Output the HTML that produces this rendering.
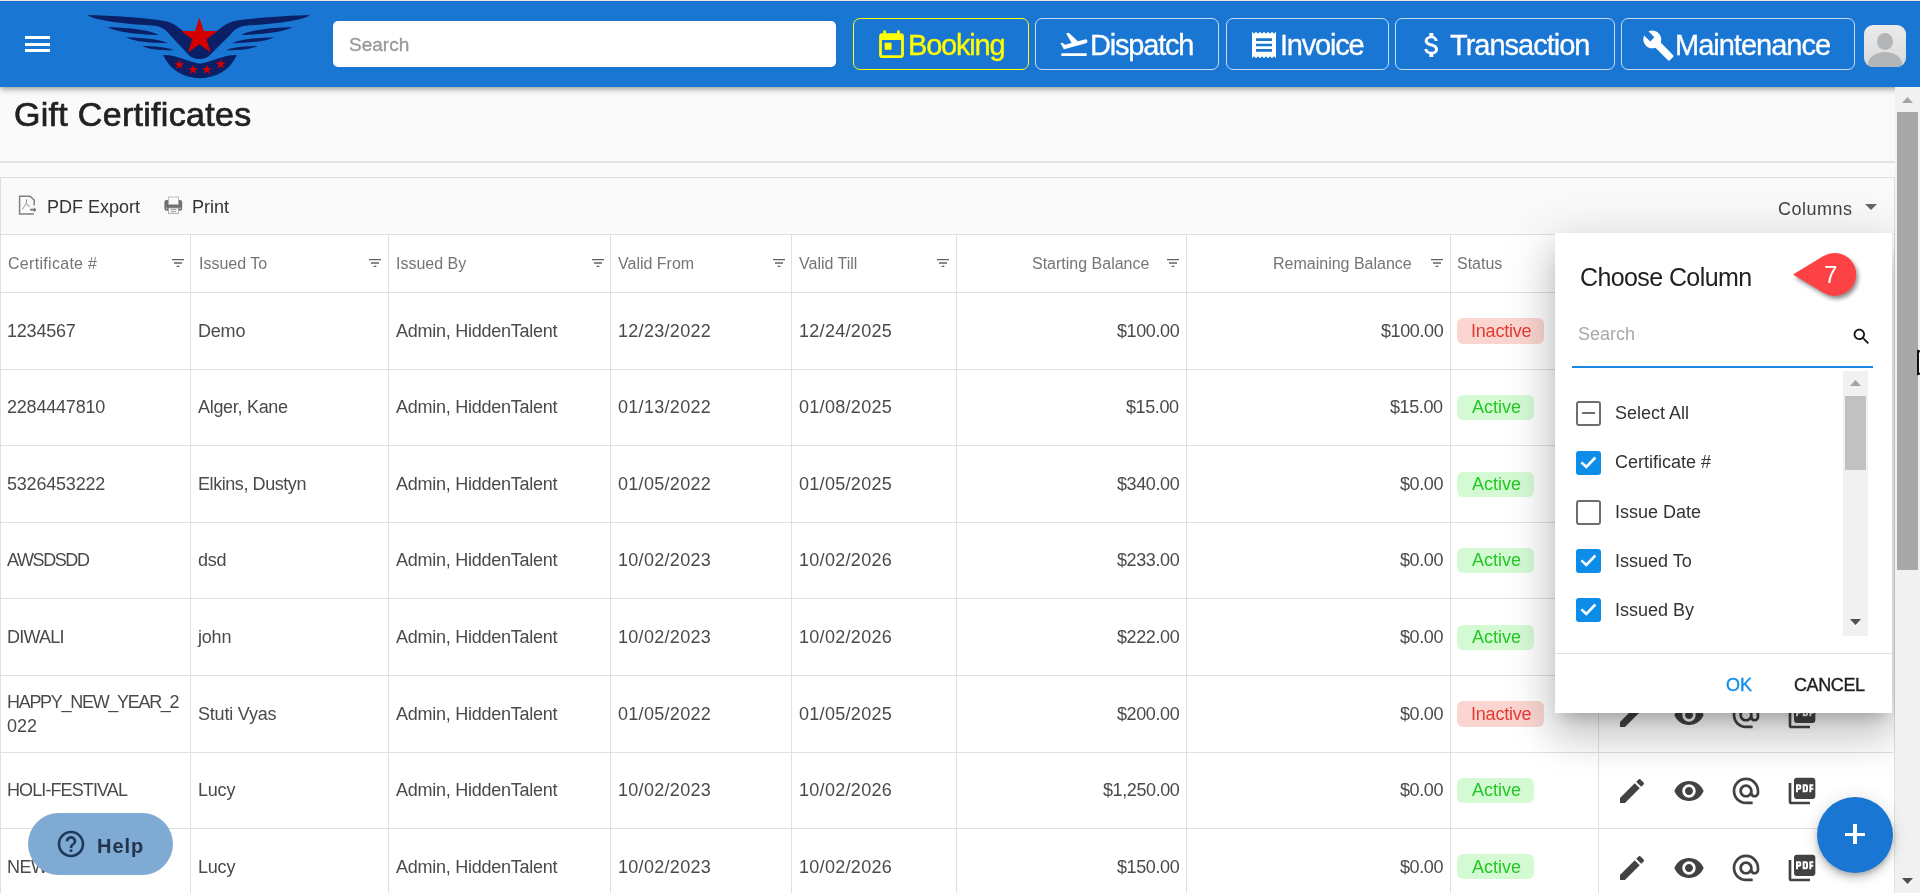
<!DOCTYPE html>
<html><head><meta charset="utf-8">
<style>
*{box-sizing:border-box;margin:0;padding:0}
html,body{width:1920px;height:893px;overflow:hidden;background:#fafafa;font-family:"Liberation Sans",sans-serif;color:#333;position:relative}
.abs{position:absolute}
.t{position:absolute;line-height:1;white-space:nowrap;will-change:transform}
.ic{position:absolute}
#hdr{position:absolute;left:0;top:0;width:1920px;height:87px;background:#1976d2;border-top:1px solid #e9e4dc;box-shadow:0 2px 4px -1px rgba(0,0,0,.2),0 4px 5px 0 rgba(0,0,0,.14),0 1px 10px 0 rgba(0,0,0,.12);z-index:5}
.nb{position:absolute;top:17px;height:52px;border:1px solid rgba(255,255,255,.75);border-radius:7px;color:#fff;font-size:29px;white-space:nowrap}
.nb span{position:absolute;top:9.5px;will-change:transform;-webkit-text-stroke:0.3px currentColor}
.nb svg{position:absolute;fill:currentColor;margin-top:0.8px}
.bx{position:absolute}
</style></head><body>
<div id="hdr">
  <!-- hamburger -->
  <div class="abs" style="left:25px;top:35px;width:25px;height:3px;background:#fff"></div>
  <div class="abs" style="left:25px;top:42px;width:25px;height:3px;background:#fff"></div>
  <div class="abs" style="left:25px;top:48px;width:25px;height:3px;background:#fff"></div>
  <!-- search -->
  <div class="abs" style="left:333px;top:20px;width:503px;height:46px;background:#fff;border-radius:5px"></div>
  <div class="abs" style="left:349px;top:33px;font-size:19px;color:#999;-webkit-text-stroke:0.35px #999;will-change:transform">Search</div>

  <!-- logo -->
  <svg class="abs" style="left:80px;top:4px" width="240" height="80" viewBox="0 0 1920 640">
    <g fill="#0a1f66">
      <path d="M60 80 C 250 85, 520 100, 690 130 C 760 150, 800 190, 830 210 L 1090 210 C 1120 190, 1160 150, 1230 130 C 1400 100, 1670 85, 1840 80 C 1790 120, 1600 150, 1320 165 C 1260 175, 1230 200, 1200 240 L 1030 410 C 990 440, 920 440, 880 410 L 720 240 C 690 200, 660 175, 600 165 C 320 150, 110 120, 60 80 Z"/>
      <path d="M220 175 C 350 180, 540 190, 630 240 C 500 235, 290 220, 220 175 Z"/>
      <path d="M370 258 C 470 262, 640 270, 700 305 C 600 305, 430 295, 370 258 Z"/>
      <path d="M500 328 C 570 330, 700 335, 750 362 C 670 365, 540 355, 500 328 Z"/>
      <path d="M1700 175 C 1570 180, 1380 190, 1290 240 C 1420 235, 1630 220, 1700 175 Z"/>
      <path d="M1550 258 C 1450 262, 1280 270, 1220 305 C 1320 305, 1490 295, 1550 258 Z"/>
      <path d="M1420 328 C 1350 330, 1220 335, 1170 362 C 1250 365, 1380 355, 1420 328 Z"/>
      <path d="M665 400 C 760 395, 860 450, 960 470 C 1060 450, 1160 395, 1255 400 C 1200 520, 1090 585, 960 585 C 830 585, 720 520, 665 400 Z"/>
    </g>
    <g fill="#d40000">
      <path d="M955 100 L 990 207 L 1102 207 L 1012 273 L 1046 380 L 955 314 L 864 380 L 898 273 L 808 207 L 920 207 Z"/>
      <path id="st" d="M0 -42 L 10 -13 L 40 -13 L 16 5 L 25 34 L 0 16 L -25 34 L -16 5 L -40 -13 L -10 -13 Z" transform="translate(795 478)"/>
      <use href="#st" transform="translate(110 40)"/>
      <use href="#st" transform="translate(220 40)"/>
      <use href="#st" transform="translate(330 -5)"/>
    </g>
  </svg>
  <!-- nav buttons -->
  <div class="nb" style="left:853px;width:176px;border-color:#ffff00;color:#ffff00">
    <svg style="left:21px;top:9px" width="33" height="33" viewBox="0 0 24 24"><path d="M19 3h-1V1h-2v2H8V1H6v2H5c-1.11 0-1.99.9-1.99 2L3 19c0 1.1.89 2 2 2h14c1.1 0 2-.9 2-2V5c0-1.1-.9-2-2-2zm0 16H5V8h14v11zM7 10h5v5H7z"/></svg>
    <span style="left:54px;letter-spacing:-1.2px">Booking</span>
  </div>
  <div class="nb" style="left:1035px;width:184px">
    <svg style="left:22px;top:8px" width="32" height="32" viewBox="0 0 24 24"><path d="M2.5 19h19v2h-19zm19.57-9.36c-.21-.8-1.04-1.28-1.84-1.06L14.92 10l-6.9-6.43-1.93.51 4.14 7.17-4.97 1.33-1.97-1.54-1.45.39 1.82 3.16.77 1.33 1.6-.43 5.31-1.42 4.35-1.16L21 11.49c.81-.23 1.28-1.05 1.07-1.85z"/></svg>
    <span style="left:54px;letter-spacing:-1.2px">Dispatch</span>
  </div>
  <div class="nb" style="left:1226px;width:163px">
    <svg style="left:21px;top:9px" width="32" height="32" viewBox="0 0 24 24"><path d="M18 17H6v-2h12v2zm0-4H6v-2h12v2zm0-4H6V7h12v2zM3 22l1.5-1.5L6 22l1.5-1.5L9 22l1.5-1.5L12 22l1.5-1.5L15 22l1.5-1.5L18 22l1.5-1.5L21 22V2l-1.5 1.5L18 2l-1.5 1.5L15 2l-1.5 1.5L12 2l-1.5 1.5L9 2 7.5 3.5 6 2 4.5 3.5 3 2v20z"/></svg>
    <span style="left:53px;letter-spacing:-1.2px">Invoice</span>
  </div>
  <div class="nb" style="left:1395px;width:220px">
    <svg style="left:20px;top:9px" width="32" height="32" viewBox="0 0 24 24"><path d="M11.8 10.9c-2.27-.59-3-1.2-3-2.15 0-1.09 1.01-1.85 2.7-1.850 1.78 0 2.44.85 2.5 2.1h2.21c-.07-1.72-1.12-3.3-3.21-3.81V3h-3v2.16c-1.940.42-3.5 1.68-3.5 3.61 0 2.31 1.91 3.46 4.7 4.13 2.5.6 3 1.48 3 2.41 0 .69-.49 1.79-2.7 1.79-2.06 0-2.87-.92-2.98-2.1h-2.2c.12 2.19 1.76 3.42 3.68 3.83V21h3v-2.15c1.95-.37 3.5-1.5 3.5-3.55 0-2.84-2.43-3.81-4.7-4.4z"/></svg>
    <span style="left:54px;letter-spacing:-1px">Transaction</span>
  </div>
  <div class="nb" style="left:1621px;width:234px">
    <svg style="left:20px;top:9px" width="33" height="33" viewBox="0 0 24 24"><path d="M22.7 19l-9.1-9.1c.9-2.3.4-5-1.5-6.9-2-2-5-2.4-7.4-1.3L9 6 6 9 1.6 4.7C.4 7.1.9 10.1 2.9 12.1c1.9 1.9 4.6 2.4 6.9 1.5l9.1 9.1c.4.4 1 .4 1.4 0l2.3-2.3c.5-.4.5-1.1.1-1.4z"/></svg>
    <span style="left:53px;letter-spacing:-1px">Maintenance</span>
  </div>
  <!-- avatar -->
  <div class="abs" style="left:1864px;top:24px;width:42px;height:42px;border-radius:9px;background:linear-gradient(#ebebeb,#d9d9d9);overflow:hidden">
    <div class="abs" style="left:13px;top:8px;width:16px;height:17px;border-radius:50%;background:#b3b6b8"></div>
    <div class="abs" style="left:4px;top:27px;width:34px;height:24px;border-radius:50%;background:#b3b6b8"></div>
  </div>
</div>

<div class="t" style="left:14px;top:97.22px;font-size:34px;color:#212121;font-weight:400;letter-spacing:0.3px;-webkit-text-stroke:0.7px #212121">Gift Certificates</div>
<div class="bx" style="left:0;top:161px;width:1895px;height:2px;background:#e3e3e3"></div>
<div class="bx" style="left:0;top:177px;width:1895px;height:716px;border:1px solid #e0e0e0;border-bottom:none;background:#fff"></div>
<div class="bx" style="left:1px;top:178px;width:1893px;height:56px;background:#fafafa"></div>
<div class="bx" style="left:0;top:234px;width:1895px;height:1px;background:#e0e0e0"></div>
<svg class="ic" style="left:14px;top:190px" width="30" height="30" viewBox="14 190 30 30"><path d="M34.2 205.6V200L30.1 196.2H19.6V214H33.8" fill="none" stroke="#808080" stroke-width="1.5"/><path d="M22.3 209.5L26.4 203.2V199.3M26.4 203.2L28 205.6 29.9 206.3" fill="none" stroke="#8a8a8a" stroke-width="0.9"/><path d="M30.1 209.7H34.2" stroke="#707070" stroke-width="1.8"/><path d="M33.8 207.2L36.4 209.7 33.8 212.2Z" fill="#707070"/></svg>
<div class="t" style="left:47px;top:197.76px;font-size:18px;color:#333;font-weight:400;">PDF Export</div>
<svg class="ic" style="left:158px;top:190px" width="30" height="30" viewBox="158 190 30 30"><rect x="164.4" y="200" width="17.8" height="10.7" rx="2.2" fill="#707070"/><rect x="168.6" y="197" width="9.8" height="7.6" fill="#fafafa" stroke="#b0b0b0" stroke-width="0.8"/><rect x="168.6" y="208" width="9.8" height="5.6" fill="#fafafa" stroke="#a0a0a0" stroke-width="0.8"/><path d="M170.6 209.6h5.8M170.6 211.7h5.8" stroke="#808080" stroke-width="0.8"/><circle cx="166.5" cy="208.2" r="0.7" fill="#ddd"/><circle cx="180.1" cy="208.2" r="0.7" fill="#ddd"/></svg>
<div class="t" style="left:192px;top:197.76px;font-size:18px;color:#333;font-weight:400;">Print</div>
<div class="t" style="left:1778px;top:199.76px;font-size:18px;color:#424242;font-weight:400;letter-spacing:0.5px">Columns</div>
<svg class="ic" style="left:1864px;top:203px" width="14" height="8" viewBox="0 0 14 8"><path d="M1 1h12L7 7z" fill="#666"/></svg>
<div class="bx" style="left:190px;top:235px;width:1px;height:658px;background:#e0e0e0"></div>
<div class="bx" style="left:388px;top:235px;width:1px;height:658px;background:#e0e0e0"></div>
<div class="bx" style="left:610px;top:235px;width:1px;height:658px;background:#e0e0e0"></div>
<div class="bx" style="left:791px;top:235px;width:1px;height:658px;background:#e0e0e0"></div>
<div class="bx" style="left:956px;top:235px;width:1px;height:658px;background:#e0e0e0"></div>
<div class="bx" style="left:1186px;top:235px;width:1px;height:658px;background:#e0e0e0"></div>
<div class="bx" style="left:1450px;top:235px;width:1px;height:658px;background:#e0e0e0"></div>
<div class="bx" style="left:1598px;top:235px;width:1px;height:658px;background:#e0e0e0"></div>
<div class="bx" style="left:1894px;top:235px;width:1px;height:658px;background:#e0e0e0"></div>
<div class="bx" style="left:1px;top:292px;width:1892px;height:1px;background:#e0e0e0"></div>
<div class="bx" style="left:1px;top:369px;width:1892px;height:1px;background:#e0e0e0"></div>
<div class="bx" style="left:1px;top:445px;width:1892px;height:1px;background:#e0e0e0"></div>
<div class="bx" style="left:1px;top:522px;width:1892px;height:1px;background:#e0e0e0"></div>
<div class="bx" style="left:1px;top:598px;width:1892px;height:1px;background:#e0e0e0"></div>
<div class="bx" style="left:1px;top:675px;width:1892px;height:1px;background:#e0e0e0"></div>
<div class="bx" style="left:1px;top:752px;width:1892px;height:1px;background:#e0e0e0"></div>
<div class="bx" style="left:1px;top:828px;width:1892px;height:1px;background:#e0e0e0"></div>
<div class="t" style="left:8px;top:256.26px;font-size:16px;color:#757575;font-weight:400;letter-spacing:0.3px">Certificate #</div>
<div class="t" style="left:199px;top:256.26px;font-size:16px;color:#757575;font-weight:400;">Issued To</div>
<div class="t" style="left:396px;top:256.26px;font-size:16px;color:#757575;font-weight:400;">Issued By</div>
<div class="t" style="left:618px;top:256.26px;font-size:16px;color:#757575;font-weight:400;">Valid From</div>
<div class="t" style="left:799px;top:256.26px;font-size:16px;color:#757575;font-weight:400;">Valid Till</div>
<div class="t" style="right:771px;top:256.26px;font-size:16px;color:#757575;font-weight:400;">Starting Balance</div>
<div class="t" style="right:508px;top:256.26px;font-size:16px;color:#757575;font-weight:400;">Remaining Balance</div>
<div class="t" style="left:1457px;top:256.26px;font-size:16px;color:#757575;font-weight:400;">Status</div>
<svg class="ic" style="left:170px;top:254.8px" width="16" height="16" viewBox="0 0 24 24"><path fill="#616161" d="M10 18h4v-2h-4v2zM3 6v2h18V6H3zm3 7h12v-2H6v2z"/></svg>
<svg class="ic" style="left:367px;top:254.8px" width="16" height="16" viewBox="0 0 24 24"><path fill="#616161" d="M10 18h4v-2h-4v2zM3 6v2h18V6H3zm3 7h12v-2H6v2z"/></svg>
<svg class="ic" style="left:589.5px;top:254.8px" width="16" height="16" viewBox="0 0 24 24"><path fill="#616161" d="M10 18h4v-2h-4v2zM3 6v2h18V6H3zm3 7h12v-2H6v2z"/></svg>
<svg class="ic" style="left:770.7px;top:254.8px" width="16" height="16" viewBox="0 0 24 24"><path fill="#616161" d="M10 18h4v-2h-4v2zM3 6v2h18V6H3zm3 7h12v-2H6v2z"/></svg>
<svg class="ic" style="left:935px;top:254.8px" width="16" height="16" viewBox="0 0 24 24"><path fill="#616161" d="M10 18h4v-2h-4v2zM3 6v2h18V6H3zm3 7h12v-2H6v2z"/></svg>
<svg class="ic" style="left:1165.3px;top:254.8px" width="16" height="16" viewBox="0 0 24 24"><path fill="#616161" d="M10 18h4v-2h-4v2zM3 6v2h18V6H3zm3 7h12v-2H6v2z"/></svg>
<svg class="ic" style="left:1429px;top:254.8px" width="16" height="16" viewBox="0 0 24 24"><path fill="#616161" d="M10 18h4v-2h-4v2zM3 6v2h18V6H3zm3 7h12v-2H6v2z"/></svg>
<div class="t" style="left:7px;top:321.65px;font-size:18px;color:#4a4a4a;font-weight:400;letter-spacing:-0.2px">1234567</div>
<div class="t" style="left:198px;top:321.65px;font-size:18px;color:#4a4a4a;font-weight:400;letter-spacing:-0.2px">Demo</div>
<div class="t" style="left:396px;top:321.65px;font-size:18px;color:#4a4a4a;font-weight:400;letter-spacing:-0.26px">Admin, HiddenTalent</div>
<div class="t" style="left:618px;top:321.65px;font-size:18px;color:#4a4a4a;font-weight:400;letter-spacing:0.3px">12/23/2022</div>
<div class="t" style="left:799px;top:321.65px;font-size:18px;color:#4a4a4a;font-weight:400;letter-spacing:0.3px">12/24/2025</div>
<div class="t" style="right:741px;top:321.65px;font-size:18px;color:#4a4a4a;font-weight:400;letter-spacing:-0.4px">$100.00</div>
<div class="t" style="right:477px;top:321.65px;font-size:18px;color:#4a4a4a;font-weight:400;letter-spacing:-0.4px">$100.00</div>
<div class="bx" style="left:1457px;top:318.0px;width:87px;height:26px;border-radius:6px;background:#fbd6d1"></div>
<div class="t" style="left:1470.5px;top:321.65px;font-size:18px;color:#e53935;font-weight:400;letter-spacing:-0.2px">Inactive</div>
<svg class="ic" style="left:1616.4px;top:315.78499999999997px" width="32" height="32" viewBox="0 0 24 24"><path fill="#424242" d="M3 17.25V21h3.75L17.81 9.94l-3.75-3.75L3 17.25zM20.71 7.04c.39-.39.39-1.02 0-1.41l-2.34-2.34c-.39-.39-1.02-.39-1.41 0l-1.83 1.83 3.75 3.75 1.83-1.83z"/></svg>
<svg class="ic" style="left:1673px;top:315.78499999999997px" width="32" height="32" viewBox="0 0 24 24"><path fill="#424242" d="M12 4.5C7 4.5 2.73 7.61 1 12c1.73 4.39 6 7.5 11 7.5s9.27-3.11 11-7.5c-1.73-4.39-6-7.5-11-7.5zM12 17c-2.760 0-5-2.24-5-5s2.24-5 5-5 5 2.24 5 5-2.24 5-5 5zm0-8c-1.66 0-3 1.34-3 3s1.34 3 3 3 3-1.34 3-3-1.34-3-3-3z"/></svg>
<svg class="ic" style="left:1729.6px;top:315.78499999999997px" width="32" height="32" viewBox="0 0 24 24"><path fill="#424242" d="M12 1.95c-5.52 0-10 4.48-10 10s4.48 10 10 10h5v-2h-5c-4.34 0-8-3.66-8-8s3.66-8 8-8 8 3.66 8 8v1.43c0 .79-.71 1.57-1.5 1.57s-1.5-.78-1.5-1.57v-1.43c0-2.76-2.24-5-5-5s-5 2.24-5 5 2.24 5 5 5c1.38 0 2.64-.56 3.54-1.47.65.89 1.77 1.47 2.96 1.470 1.97 0 3.5-1.6 3.5-3.57v-1.43c0-5.52-4.48-10-10-10zm0 13c-1.66 0-3-1.34-3-3s1.34-3 3-3 3 1.34 3 3-1.34 3-3 3z"/></svg>
<svg class="ic" style="left:1786.4px;top:315.78499999999997px" width="32" height="32" viewBox="0 0 24 24"><path fill="#424242" d="M20 2H8c-1.1 0-2 .9-2 2v12c0 1.1.9 2 2 2h12c1.1 0 2-.9 2-2V4c0-1.1-.9-2-2-2zm-8.5 7.5c0 .83-.67 1.5-1.5 1.5H9v2H7.5V7H10c.83 0 1.5.67 1.5 1.5v1zm5 2c0 .83-.67 1.5-1.5 1.5h-2.5V7H15c.83 0 1.5.67 1.5 1.5v3zm4-3H19v1h1.5V11H19v2h-1.5V7h3v1.5zM9 9.5h1v-1H9v1zM4 6H2v14c0 1.1.9 2 2 2h14v-2H4V6zm10 5.5h1v-3h-1v3z"/></svg>
<div class="t" style="left:7px;top:398.22px;font-size:18px;color:#4a4a4a;font-weight:400;letter-spacing:-0.2px">2284447810</div>
<div class="t" style="left:198px;top:398.22px;font-size:18px;color:#4a4a4a;font-weight:400;letter-spacing:-0.3px">Alger, Kane</div>
<div class="t" style="left:396px;top:398.22px;font-size:18px;color:#4a4a4a;font-weight:400;letter-spacing:-0.26px">Admin, HiddenTalent</div>
<div class="t" style="left:618px;top:398.22px;font-size:18px;color:#4a4a4a;font-weight:400;letter-spacing:0.3px">01/13/2022</div>
<div class="t" style="left:799px;top:398.22px;font-size:18px;color:#4a4a4a;font-weight:400;letter-spacing:0.3px">01/08/2025</div>
<div class="t" style="right:741px;top:398.22px;font-size:18px;color:#4a4a4a;font-weight:400;letter-spacing:-0.4px">$15.00</div>
<div class="t" style="right:477px;top:398.22px;font-size:18px;color:#4a4a4a;font-weight:400;letter-spacing:-0.4px">$15.00</div>
<div class="bx" style="left:1457px;top:395.0px;width:77px;height:25px;border-radius:6px;background:#d4fad4"></div>
<div class="t" style="left:1471.5px;top:398.22px;font-size:18px;color:#22c922;font-weight:400;">Active</div>
<svg class="ic" style="left:1616.4px;top:392.355px" width="32" height="32" viewBox="0 0 24 24"><path fill="#424242" d="M3 17.25V21h3.75L17.81 9.94l-3.75-3.75L3 17.25zM20.71 7.04c.39-.39.39-1.02 0-1.41l-2.34-2.34c-.39-.39-1.02-.39-1.41 0l-1.83 1.83 3.75 3.75 1.83-1.83z"/></svg>
<svg class="ic" style="left:1673px;top:392.355px" width="32" height="32" viewBox="0 0 24 24"><path fill="#424242" d="M12 4.5C7 4.5 2.73 7.61 1 12c1.73 4.39 6 7.5 11 7.5s9.27-3.11 11-7.5c-1.73-4.39-6-7.5-11-7.5zM12 17c-2.760 0-5-2.24-5-5s2.24-5 5-5 5 2.24 5 5-2.24 5-5 5zm0-8c-1.66 0-3 1.34-3 3s1.34 3 3 3 3-1.34 3-3-1.34-3-3-3z"/></svg>
<svg class="ic" style="left:1729.6px;top:392.355px" width="32" height="32" viewBox="0 0 24 24"><path fill="#424242" d="M12 1.95c-5.52 0-10 4.48-10 10s4.48 10 10 10h5v-2h-5c-4.34 0-8-3.66-8-8s3.66-8 8-8 8 3.66 8 8v1.43c0 .79-.71 1.57-1.5 1.57s-1.5-.78-1.5-1.57v-1.43c0-2.76-2.24-5-5-5s-5 2.24-5 5 2.24 5 5 5c1.38 0 2.64-.56 3.54-1.47.65.89 1.77 1.47 2.96 1.470 1.97 0 3.5-1.6 3.5-3.57v-1.43c0-5.52-4.48-10-10-10zm0 13c-1.66 0-3-1.34-3-3s1.34-3 3-3 3 1.34 3 3-1.34 3-3 3z"/></svg>
<svg class="ic" style="left:1786.4px;top:392.355px" width="32" height="32" viewBox="0 0 24 24"><path fill="#424242" d="M20 2H8c-1.1 0-2 .9-2 2v12c0 1.1.9 2 2 2h12c1.1 0 2-.9 2-2V4c0-1.1-.9-2-2-2zm-8.5 7.5c0 .83-.67 1.5-1.5 1.5H9v2H7.5V7H10c.83 0 1.5.67 1.5 1.5v1zm5 2c0 .83-.67 1.5-1.5 1.5h-2.5V7H15c.83 0 1.5.67 1.5 1.5v3zm4-3H19v1h1.5V11H19v2h-1.5V7h3v1.5zM9 9.5h1v-1H9v1zM4 6H2v14c0 1.1.9 2 2 2h14v-2H4V6zm10 5.5h1v-3h-1v3z"/></svg>
<div class="t" style="left:7px;top:474.79px;font-size:18px;color:#4a4a4a;font-weight:400;letter-spacing:-0.2px">5326453222</div>
<div class="t" style="left:198px;top:474.79px;font-size:18px;color:#4a4a4a;font-weight:400;letter-spacing:-0.43px">Elkins, Dustyn</div>
<div class="t" style="left:396px;top:474.79px;font-size:18px;color:#4a4a4a;font-weight:400;letter-spacing:-0.26px">Admin, HiddenTalent</div>
<div class="t" style="left:618px;top:474.79px;font-size:18px;color:#4a4a4a;font-weight:400;letter-spacing:0.3px">01/05/2022</div>
<div class="t" style="left:799px;top:474.79px;font-size:18px;color:#4a4a4a;font-weight:400;letter-spacing:0.3px">01/05/2025</div>
<div class="t" style="right:741px;top:474.79px;font-size:18px;color:#4a4a4a;font-weight:400;letter-spacing:-0.4px">$340.00</div>
<div class="t" style="right:477px;top:474.79px;font-size:18px;color:#4a4a4a;font-weight:400;letter-spacing:-0.4px">$0.00</div>
<div class="bx" style="left:1457px;top:471.5px;width:77px;height:25px;border-radius:6px;background:#d4fad4"></div>
<div class="t" style="left:1471.5px;top:474.79px;font-size:18px;color:#22c922;font-weight:400;">Active</div>
<svg class="ic" style="left:1616.4px;top:468.92499999999995px" width="32" height="32" viewBox="0 0 24 24"><path fill="#424242" d="M3 17.25V21h3.75L17.81 9.94l-3.75-3.75L3 17.25zM20.71 7.04c.39-.39.39-1.02 0-1.41l-2.34-2.34c-.39-.39-1.02-.39-1.41 0l-1.83 1.83 3.75 3.75 1.83-1.83z"/></svg>
<svg class="ic" style="left:1673px;top:468.92499999999995px" width="32" height="32" viewBox="0 0 24 24"><path fill="#424242" d="M12 4.5C7 4.5 2.73 7.61 1 12c1.73 4.39 6 7.5 11 7.5s9.27-3.11 11-7.5c-1.73-4.39-6-7.5-11-7.5zM12 17c-2.760 0-5-2.24-5-5s2.24-5 5-5 5 2.24 5 5-2.24 5-5 5zm0-8c-1.66 0-3 1.34-3 3s1.34 3 3 3 3-1.34 3-3-1.34-3-3-3z"/></svg>
<svg class="ic" style="left:1729.6px;top:468.92499999999995px" width="32" height="32" viewBox="0 0 24 24"><path fill="#424242" d="M12 1.95c-5.52 0-10 4.48-10 10s4.48 10 10 10h5v-2h-5c-4.34 0-8-3.66-8-8s3.66-8 8-8 8 3.66 8 8v1.43c0 .79-.71 1.57-1.5 1.57s-1.5-.78-1.5-1.57v-1.43c0-2.76-2.24-5-5-5s-5 2.24-5 5 2.24 5 5 5c1.38 0 2.64-.56 3.54-1.47.65.89 1.77 1.47 2.96 1.470 1.97 0 3.5-1.6 3.5-3.57v-1.43c0-5.52-4.48-10-10-10zm0 13c-1.66 0-3-1.34-3-3s1.34-3 3-3 3 1.34 3 3-1.34 3-3 3z"/></svg>
<svg class="ic" style="left:1786.4px;top:468.92499999999995px" width="32" height="32" viewBox="0 0 24 24"><path fill="#424242" d="M20 2H8c-1.1 0-2 .9-2 2v12c0 1.1.9 2 2 2h12c1.1 0 2-.9 2-2V4c0-1.1-.9-2-2-2zm-8.5 7.5c0 .83-.67 1.5-1.5 1.5H9v2H7.5V7H10c.83 0 1.5.67 1.5 1.5v1zm5 2c0 .83-.67 1.5-1.5 1.5h-2.5V7H15c.83 0 1.5.67 1.5 1.5v3zm4-3H19v1h1.5V11H19v2h-1.5V7h3v1.5zM9 9.5h1v-1H9v1zM4 6H2v14c0 1.1.9 2 2 2h14v-2H4V6zm10 5.5h1v-3h-1v3z"/></svg>
<div class="t" style="left:7px;top:551.36px;font-size:18px;color:#4a4a4a;font-weight:400;letter-spacing:-1.4px">AWSDSDD</div>
<div class="t" style="left:198px;top:551.36px;font-size:18px;color:#4a4a4a;font-weight:400;letter-spacing:-0.2px">dsd</div>
<div class="t" style="left:396px;top:551.36px;font-size:18px;color:#4a4a4a;font-weight:400;letter-spacing:-0.26px">Admin, HiddenTalent</div>
<div class="t" style="left:618px;top:551.36px;font-size:18px;color:#4a4a4a;font-weight:400;letter-spacing:0.3px">10/02/2023</div>
<div class="t" style="left:799px;top:551.36px;font-size:18px;color:#4a4a4a;font-weight:400;letter-spacing:0.3px">10/02/2026</div>
<div class="t" style="right:741px;top:551.36px;font-size:18px;color:#4a4a4a;font-weight:400;letter-spacing:-0.4px">$233.00</div>
<div class="t" style="right:477px;top:551.36px;font-size:18px;color:#4a4a4a;font-weight:400;letter-spacing:-0.4px">$0.00</div>
<div class="bx" style="left:1457px;top:548.1px;width:77px;height:25px;border-radius:6px;background:#d4fad4"></div>
<div class="t" style="left:1471.5px;top:551.36px;font-size:18px;color:#22c922;font-weight:400;">Active</div>
<svg class="ic" style="left:1616.4px;top:545.495px" width="32" height="32" viewBox="0 0 24 24"><path fill="#424242" d="M3 17.25V21h3.75L17.81 9.94l-3.75-3.75L3 17.25zM20.71 7.04c.39-.39.39-1.02 0-1.41l-2.34-2.34c-.39-.39-1.02-.39-1.41 0l-1.83 1.83 3.75 3.75 1.83-1.83z"/></svg>
<svg class="ic" style="left:1673px;top:545.495px" width="32" height="32" viewBox="0 0 24 24"><path fill="#424242" d="M12 4.5C7 4.5 2.73 7.61 1 12c1.73 4.39 6 7.5 11 7.5s9.27-3.11 11-7.5c-1.73-4.39-6-7.5-11-7.5zM12 17c-2.760 0-5-2.24-5-5s2.24-5 5-5 5 2.24 5 5-2.24 5-5 5zm0-8c-1.66 0-3 1.34-3 3s1.34 3 3 3 3-1.34 3-3-1.34-3-3-3z"/></svg>
<svg class="ic" style="left:1729.6px;top:545.495px" width="32" height="32" viewBox="0 0 24 24"><path fill="#424242" d="M12 1.95c-5.52 0-10 4.48-10 10s4.48 10 10 10h5v-2h-5c-4.34 0-8-3.66-8-8s3.66-8 8-8 8 3.66 8 8v1.43c0 .79-.71 1.57-1.5 1.57s-1.5-.78-1.5-1.57v-1.43c0-2.76-2.24-5-5-5s-5 2.24-5 5 2.24 5 5 5c1.38 0 2.64-.56 3.54-1.47.65.89 1.77 1.47 2.96 1.470 1.97 0 3.5-1.6 3.5-3.57v-1.43c0-5.52-4.48-10-10-10zm0 13c-1.66 0-3-1.34-3-3s1.34-3 3-3 3 1.34 3 3-1.34 3-3 3z"/></svg>
<svg class="ic" style="left:1786.4px;top:545.495px" width="32" height="32" viewBox="0 0 24 24"><path fill="#424242" d="M20 2H8c-1.1 0-2 .9-2 2v12c0 1.1.9 2 2 2h12c1.1 0 2-.9 2-2V4c0-1.1-.9-2-2-2zm-8.5 7.5c0 .83-.67 1.5-1.5 1.5H9v2H7.5V7H10c.83 0 1.5.67 1.5 1.5v1zm5 2c0 .83-.67 1.5-1.5 1.5h-2.5V7H15c.83 0 1.5.67 1.5 1.5v3zm4-3H19v1h1.5V11H19v2h-1.5V7h3v1.5zM9 9.5h1v-1H9v1zM4 6H2v14c0 1.1.9 2 2 2h14v-2H4V6zm10 5.5h1v-3h-1v3z"/></svg>
<div class="t" style="left:7px;top:627.93px;font-size:18px;color:#4a4a4a;font-weight:400;letter-spacing:-0.75px">DIWALI</div>
<div class="t" style="left:198px;top:627.93px;font-size:18px;color:#4a4a4a;font-weight:400;letter-spacing:-0.2px">john</div>
<div class="t" style="left:396px;top:627.93px;font-size:18px;color:#4a4a4a;font-weight:400;letter-spacing:-0.26px">Admin, HiddenTalent</div>
<div class="t" style="left:618px;top:627.93px;font-size:18px;color:#4a4a4a;font-weight:400;letter-spacing:0.3px">10/02/2023</div>
<div class="t" style="left:799px;top:627.93px;font-size:18px;color:#4a4a4a;font-weight:400;letter-spacing:0.3px">10/02/2026</div>
<div class="t" style="right:741px;top:627.93px;font-size:18px;color:#4a4a4a;font-weight:400;letter-spacing:-0.4px">$222.00</div>
<div class="t" style="right:477px;top:627.93px;font-size:18px;color:#4a4a4a;font-weight:400;letter-spacing:-0.4px">$0.00</div>
<div class="bx" style="left:1457px;top:624.7px;width:77px;height:25px;border-radius:6px;background:#d4fad4"></div>
<div class="t" style="left:1471.5px;top:627.93px;font-size:18px;color:#22c922;font-weight:400;">Active</div>
<svg class="ic" style="left:1616.4px;top:622.0649999999999px" width="32" height="32" viewBox="0 0 24 24"><path fill="#424242" d="M3 17.25V21h3.75L17.81 9.94l-3.75-3.75L3 17.25zM20.71 7.04c.39-.39.39-1.02 0-1.41l-2.34-2.34c-.39-.39-1.02-.39-1.41 0l-1.83 1.83 3.75 3.75 1.83-1.83z"/></svg>
<svg class="ic" style="left:1673px;top:622.0649999999999px" width="32" height="32" viewBox="0 0 24 24"><path fill="#424242" d="M12 4.5C7 4.5 2.73 7.61 1 12c1.73 4.39 6 7.5 11 7.5s9.27-3.11 11-7.5c-1.73-4.39-6-7.5-11-7.5zM12 17c-2.760 0-5-2.24-5-5s2.24-5 5-5 5 2.24 5 5-2.24 5-5 5zm0-8c-1.66 0-3 1.34-3 3s1.34 3 3 3 3-1.34 3-3-1.34-3-3-3z"/></svg>
<svg class="ic" style="left:1729.6px;top:622.0649999999999px" width="32" height="32" viewBox="0 0 24 24"><path fill="#424242" d="M12 1.95c-5.52 0-10 4.48-10 10s4.48 10 10 10h5v-2h-5c-4.34 0-8-3.66-8-8s3.66-8 8-8 8 3.66 8 8v1.43c0 .79-.71 1.57-1.5 1.57s-1.5-.78-1.5-1.57v-1.43c0-2.76-2.24-5-5-5s-5 2.24-5 5 2.24 5 5 5c1.38 0 2.64-.56 3.54-1.47.65.89 1.77 1.47 2.96 1.470 1.97 0 3.5-1.6 3.5-3.57v-1.43c0-5.52-4.48-10-10-10zm0 13c-1.66 0-3-1.34-3-3s1.34-3 3-3 3 1.34 3 3-1.34 3-3 3z"/></svg>
<svg class="ic" style="left:1786.4px;top:622.0649999999999px" width="32" height="32" viewBox="0 0 24 24"><path fill="#424242" d="M20 2H8c-1.1 0-2 .9-2 2v12c0 1.1.9 2 2 2h12c1.1 0 2-.9 2-2V4c0-1.1-.9-2-2-2zm-8.5 7.5c0 .83-.67 1.5-1.5 1.5H9v2H7.5V7H10c.83 0 1.5.67 1.5 1.5v1zm5 2c0 .83-.67 1.5-1.5 1.5h-2.5V7H15c.83 0 1.5.67 1.5 1.5v3zm4-3H19v1h1.5V11H19v2h-1.5V7h3v1.5zM9 9.5h1v-1H9v1zM4 6H2v14c0 1.1.9 2 2 2h14v-2H4V6zm10 5.5h1v-3h-1v3z"/></svg>
<div class="t" style="left:7px;top:692.96px;font-size:18px;color:#4a4a4a;font-weight:400;letter-spacing:-1.3px">HAPPY_NEW_YEAR_2</div>
<div class="t" style="left:7px;top:716.76px;font-size:18px;color:#4a4a4a;font-weight:400;">022</div>
<div class="t" style="left:198px;top:704.50px;font-size:18px;color:#4a4a4a;font-weight:400;letter-spacing:-0.2px">Stuti Vyas</div>
<div class="t" style="left:396px;top:704.50px;font-size:18px;color:#4a4a4a;font-weight:400;letter-spacing:-0.26px">Admin, HiddenTalent</div>
<div class="t" style="left:618px;top:704.50px;font-size:18px;color:#4a4a4a;font-weight:400;letter-spacing:0.3px">01/05/2022</div>
<div class="t" style="left:799px;top:704.50px;font-size:18px;color:#4a4a4a;font-weight:400;letter-spacing:0.3px">01/05/2025</div>
<div class="t" style="right:741px;top:704.50px;font-size:18px;color:#4a4a4a;font-weight:400;letter-spacing:-0.4px">$200.00</div>
<div class="t" style="right:477px;top:704.50px;font-size:18px;color:#4a4a4a;font-weight:400;letter-spacing:-0.4px">$0.00</div>
<div class="bx" style="left:1457px;top:700.8px;width:87px;height:26px;border-radius:6px;background:#fbd6d1"></div>
<div class="t" style="left:1470.5px;top:704.50px;font-size:18px;color:#e53935;font-weight:400;letter-spacing:-0.2px">Inactive</div>
<svg class="ic" style="left:1616.4px;top:698.635px" width="32" height="32" viewBox="0 0 24 24"><path fill="#424242" d="M3 17.25V21h3.75L17.81 9.94l-3.75-3.75L3 17.25zM20.71 7.04c.39-.39.39-1.02 0-1.41l-2.34-2.34c-.39-.39-1.02-.39-1.41 0l-1.83 1.83 3.75 3.75 1.83-1.83z"/></svg>
<svg class="ic" style="left:1673px;top:698.635px" width="32" height="32" viewBox="0 0 24 24"><path fill="#424242" d="M12 4.5C7 4.5 2.73 7.61 1 12c1.73 4.39 6 7.5 11 7.5s9.27-3.11 11-7.5c-1.73-4.39-6-7.5-11-7.5zM12 17c-2.760 0-5-2.24-5-5s2.24-5 5-5 5 2.24 5 5-2.24 5-5 5zm0-8c-1.66 0-3 1.34-3 3s1.34 3 3 3 3-1.34 3-3-1.34-3-3-3z"/></svg>
<svg class="ic" style="left:1729.6px;top:698.635px" width="32" height="32" viewBox="0 0 24 24"><path fill="#424242" d="M12 1.95c-5.52 0-10 4.48-10 10s4.48 10 10 10h5v-2h-5c-4.34 0-8-3.66-8-8s3.66-8 8-8 8 3.66 8 8v1.43c0 .79-.71 1.57-1.5 1.57s-1.5-.78-1.5-1.57v-1.43c0-2.76-2.24-5-5-5s-5 2.24-5 5 2.24 5 5 5c1.38 0 2.64-.56 3.54-1.47.65.89 1.77 1.47 2.96 1.470 1.97 0 3.5-1.6 3.5-3.57v-1.43c0-5.52-4.48-10-10-10zm0 13c-1.66 0-3-1.34-3-3s1.34-3 3-3 3 1.34 3 3-1.34 3-3 3z"/></svg>
<svg class="ic" style="left:1786.4px;top:698.635px" width="32" height="32" viewBox="0 0 24 24"><path fill="#424242" d="M20 2H8c-1.1 0-2 .9-2 2v12c0 1.1.9 2 2 2h12c1.1 0 2-.9 2-2V4c0-1.1-.9-2-2-2zm-8.5 7.5c0 .83-.67 1.5-1.5 1.5H9v2H7.5V7H10c.83 0 1.5.67 1.5 1.5v1zm5 2c0 .83-.67 1.5-1.5 1.5h-2.5V7H15c.83 0 1.5.67 1.5 1.5v3zm4-3H19v1h1.5V11H19v2h-1.5V7h3v1.5zM9 9.5h1v-1H9v1zM4 6H2v14c0 1.1.9 2 2 2h14v-2H4V6zm10 5.5h1v-3h-1v3z"/></svg>
<div class="t" style="left:7px;top:781.07px;font-size:18px;color:#4a4a4a;font-weight:400;letter-spacing:-0.9px">HOLI-FESTIVAL</div>
<div class="t" style="left:198px;top:781.07px;font-size:18px;color:#4a4a4a;font-weight:400;letter-spacing:-0.2px">Lucy</div>
<div class="t" style="left:396px;top:781.07px;font-size:18px;color:#4a4a4a;font-weight:400;letter-spacing:-0.26px">Admin, HiddenTalent</div>
<div class="t" style="left:618px;top:781.07px;font-size:18px;color:#4a4a4a;font-weight:400;letter-spacing:0.3px">10/02/2023</div>
<div class="t" style="left:799px;top:781.07px;font-size:18px;color:#4a4a4a;font-weight:400;letter-spacing:0.3px">10/02/2026</div>
<div class="t" style="right:741px;top:781.07px;font-size:18px;color:#4a4a4a;font-weight:400;letter-spacing:-0.4px">$1,250.00</div>
<div class="t" style="right:477px;top:781.07px;font-size:18px;color:#4a4a4a;font-weight:400;letter-spacing:-0.4px">$0.00</div>
<div class="bx" style="left:1457px;top:777.8px;width:77px;height:25px;border-radius:6px;background:#d4fad4"></div>
<div class="t" style="left:1471.5px;top:781.07px;font-size:18px;color:#22c922;font-weight:400;">Active</div>
<svg class="ic" style="left:1616.4px;top:775.2049999999999px" width="32" height="32" viewBox="0 0 24 24"><path fill="#424242" d="M3 17.25V21h3.75L17.81 9.94l-3.75-3.75L3 17.25zM20.71 7.04c.39-.39.39-1.02 0-1.41l-2.34-2.34c-.39-.39-1.02-.39-1.41 0l-1.83 1.83 3.75 3.75 1.83-1.83z"/></svg>
<svg class="ic" style="left:1673px;top:775.2049999999999px" width="32" height="32" viewBox="0 0 24 24"><path fill="#424242" d="M12 4.5C7 4.5 2.73 7.61 1 12c1.73 4.39 6 7.5 11 7.5s9.27-3.11 11-7.5c-1.73-4.39-6-7.5-11-7.5zM12 17c-2.760 0-5-2.24-5-5s2.24-5 5-5 5 2.24 5 5-2.24 5-5 5zm0-8c-1.66 0-3 1.34-3 3s1.34 3 3 3 3-1.34 3-3-1.34-3-3-3z"/></svg>
<svg class="ic" style="left:1729.6px;top:775.2049999999999px" width="32" height="32" viewBox="0 0 24 24"><path fill="#424242" d="M12 1.95c-5.52 0-10 4.48-10 10s4.48 10 10 10h5v-2h-5c-4.34 0-8-3.66-8-8s3.66-8 8-8 8 3.66 8 8v1.43c0 .79-.71 1.57-1.5 1.57s-1.5-.78-1.5-1.57v-1.43c0-2.76-2.24-5-5-5s-5 2.24-5 5 2.24 5 5 5c1.38 0 2.64-.56 3.54-1.47.65.89 1.77 1.47 2.96 1.470 1.97 0 3.5-1.6 3.5-3.57v-1.43c0-5.52-4.48-10-10-10zm0 13c-1.66 0-3-1.34-3-3s1.34-3 3-3 3 1.34 3 3-1.34 3-3 3z"/></svg>
<svg class="ic" style="left:1786.4px;top:775.2049999999999px" width="32" height="32" viewBox="0 0 24 24"><path fill="#424242" d="M20 2H8c-1.1 0-2 .9-2 2v12c0 1.1.9 2 2 2h12c1.1 0 2-.9 2-2V4c0-1.1-.9-2-2-2zm-8.5 7.5c0 .83-.67 1.5-1.5 1.5H9v2H7.5V7H10c.83 0 1.5.67 1.5 1.5v1zm5 2c0 .83-.67 1.5-1.5 1.5h-2.5V7H15c.83 0 1.5.67 1.5 1.5v3zm4-3H19v1h1.5V11H19v2h-1.5V7h3v1.5zM9 9.5h1v-1H9v1zM4 6H2v14c0 1.1.9 2 2 2h14v-2H4V6zm10 5.5h1v-3h-1v3z"/></svg>
<div class="t" style="left:7px;top:857.64px;font-size:18px;color:#4a4a4a;font-weight:400;letter-spacing:-0.5px">NEW</div>
<div class="t" style="left:198px;top:857.64px;font-size:18px;color:#4a4a4a;font-weight:400;letter-spacing:-0.2px">Lucy</div>
<div class="t" style="left:396px;top:857.64px;font-size:18px;color:#4a4a4a;font-weight:400;letter-spacing:-0.26px">Admin, HiddenTalent</div>
<div class="t" style="left:618px;top:857.64px;font-size:18px;color:#4a4a4a;font-weight:400;letter-spacing:0.3px">10/02/2023</div>
<div class="t" style="left:799px;top:857.64px;font-size:18px;color:#4a4a4a;font-weight:400;letter-spacing:0.3px">10/02/2026</div>
<div class="t" style="right:741px;top:857.64px;font-size:18px;color:#4a4a4a;font-weight:400;letter-spacing:-0.4px">$150.00</div>
<div class="t" style="right:477px;top:857.64px;font-size:18px;color:#4a4a4a;font-weight:400;letter-spacing:-0.4px">$0.00</div>
<div class="bx" style="left:1457px;top:854.4px;width:77px;height:25px;border-radius:6px;background:#d4fad4"></div>
<div class="t" style="left:1471.5px;top:857.64px;font-size:18px;color:#22c922;font-weight:400;">Active</div>
<svg class="ic" style="left:1616.4px;top:851.775px" width="32" height="32" viewBox="0 0 24 24"><path fill="#424242" d="M3 17.25V21h3.75L17.81 9.94l-3.75-3.75L3 17.25zM20.71 7.04c.39-.39.39-1.02 0-1.41l-2.34-2.34c-.39-.39-1.02-.39-1.41 0l-1.83 1.83 3.75 3.75 1.83-1.83z"/></svg>
<svg class="ic" style="left:1673px;top:851.775px" width="32" height="32" viewBox="0 0 24 24"><path fill="#424242" d="M12 4.5C7 4.5 2.73 7.61 1 12c1.73 4.39 6 7.5 11 7.5s9.27-3.11 11-7.5c-1.73-4.39-6-7.5-11-7.5zM12 17c-2.760 0-5-2.24-5-5s2.24-5 5-5 5 2.24 5 5-2.24 5-5 5zm0-8c-1.66 0-3 1.34-3 3s1.34 3 3 3 3-1.34 3-3-1.34-3-3-3z"/></svg>
<svg class="ic" style="left:1729.6px;top:851.775px" width="32" height="32" viewBox="0 0 24 24"><path fill="#424242" d="M12 1.95c-5.52 0-10 4.48-10 10s4.48 10 10 10h5v-2h-5c-4.34 0-8-3.66-8-8s3.66-8 8-8 8 3.66 8 8v1.43c0 .79-.71 1.57-1.5 1.57s-1.5-.78-1.5-1.57v-1.43c0-2.76-2.24-5-5-5s-5 2.24-5 5 2.24 5 5 5c1.38 0 2.64-.56 3.54-1.47.65.89 1.77 1.47 2.96 1.470 1.97 0 3.5-1.6 3.5-3.57v-1.43c0-5.52-4.48-10-10-10zm0 13c-1.66 0-3-1.34-3-3s1.34-3 3-3 3 1.34 3 3-1.34 3-3 3z"/></svg>
<svg class="ic" style="left:1786.4px;top:851.775px" width="32" height="32" viewBox="0 0 24 24"><path fill="#424242" d="M20 2H8c-1.1 0-2 .9-2 2v12c0 1.1.9 2 2 2h12c1.1 0 2-.9 2-2V4c0-1.1-.9-2-2-2zm-8.5 7.5c0 .83-.67 1.5-1.5 1.5H9v2H7.5V7H10c.83 0 1.5.67 1.5 1.5v1zm5 2c0 .83-.67 1.5-1.5 1.5h-2.5V7H15c.83 0 1.5.67 1.5 1.5v3zm4-3H19v1h1.5V11H19v2h-1.5V7h3v1.5zM9 9.5h1v-1H9v1zM4 6H2v14c0 1.1.9 2 2 2h14v-2H4V6zm10 5.5h1v-3h-1v3z"/></svg>
<div class="bx" style="left:1895px;top:87px;width:25px;height:806px;background:#f1f1f1;z-index:5"></div>
<div class="bx" style="left:1897px;top:112px;width:21px;height:458px;background:#a8a8a8;z-index:5"></div>
<svg class="ic" style="left:1902px;top:97px;z-index:5" width="11" height="6" viewBox="0 0 11 6"><path d="M0 6L5.5 0 11 6z" fill="#a3a3a3"/></svg>
<svg class="ic" style="left:1902px;top:878px;z-index:5" width="11" height="6" viewBox="0 0 11 6"><path d="M0 0h11L5.5 6z" fill="#505050"/></svg>
<div class="bx" style="left:1555px;top:233px;width:337px;height:480px;background:#fff;box-shadow:0 11px 15px -7px rgba(0,0,0,.2),0 24px 38px 3px rgba(0,0,0,.14),0 9px 46px 8px rgba(0,0,0,.12);z-index:3">
</div>
<div style="position:absolute;left:0;top:0;width:1920px;height:893px;z-index:4;pointer-events:none">
<div class="t" style="left:1580px;top:264.84px;font-size:25px;color:#212121;font-weight:400;letter-spacing:-0.6px">Choose Column</div>
<svg class="ic" style="left:1785px;top:245px;filter:drop-shadow(2px 3px 2px rgba(0,0,0,.45))" width="80" height="60" viewBox="1785 245 80 60"><path d="M1793 274.4 L1823.5 256 A21.5 21.5 0 1 1 1823.5 292.8 Z" fill="#fc4244"/></svg>
<div class="t" style="left:1823.5px;top:262.68px;font-size:24px;color:#fff;font-weight:400;">7</div>
<div class="t" style="left:1578px;top:324.76px;font-size:18px;color:#a8a8a8;font-weight:400;">Search</div>
<svg class="ic" style="left:1850.5px;top:325.8px" width="21" height="21" viewBox="0 0 24 24"><path fill="#111" d="M15.5 14h-.79l-.28-.27C15.41 12.59 16 11.11 16 9.5 16 5.91 13.09 3 9.5 3S3 5.91 3 9.5 5.91 16 9.5 16c1.61 0 3.09-.59 4.23-1.57l.27.28v.79l5 4.99L20.49 19l-4.99-5zm-6 0C7.01 14 5 11.99 5 9.5S7.01 5 9.5 5 14 7.01 14 9.5 11.99 14 9.5 14z"/></svg>
<div class="bx" style="left:1572px;top:366px;width:301px;height:2px;background:#1e88e5"></div>
<div class="bx" style="left:1843px;top:371px;width:25px;height:265px;background:#f1f1f1"></div>
<div class="bx" style="left:1845px;top:396px;width:21px;height:74px;background:#c1c1c1"></div>
<svg class="ic" style="left:1850px;top:380px" width="11" height="6" viewBox="0 0 11 6"><path d="M0 6L5.5 0 11 6z" fill="#a3a3a3"/></svg>
<svg class="ic" style="left:1850px;top:619px" width="11" height="6" viewBox="0 0 11 6"><path d="M0 0h11L5.5 6z" fill="#505050"/></svg>
<div class="bx" style="left:1576px;top:400.5px;width:25px;height:25px;border-radius:3px;border:2px solid #6e6e6e"></div>
<div class="bx" style="left:1582px;top:411.5px;width:13px;height:2px;background:#6e6e6e"></div>
<div class="t" style="left:1614.5px;top:403.76px;font-size:18px;color:#333;font-weight:400;">Select All</div>
<svg class="ic" style="left:1576px;top:450.5px" width="25" height="24" viewBox="0 0 25 24"><rect width="25" height="24" rx="3" fill="#0b8de9"/><path d="M5.4 11.4L10.3 16 19.4 6.5" fill="none" stroke="#fff" stroke-width="2.6"/></svg>
<div class="t" style="left:1614.5px;top:453.26px;font-size:18px;color:#333;font-weight:400;">Certificate #</div>
<div class="bx" style="left:1576px;top:499.5px;width:25px;height:25px;border-radius:3px;border:2px solid #6e6e6e"></div>
<div class="t" style="left:1614.5px;top:502.76px;font-size:18px;color:#333;font-weight:400;">Issue Date</div>
<svg class="ic" style="left:1576px;top:549.0px" width="25" height="24" viewBox="0 0 25 24"><rect width="25" height="24" rx="3" fill="#0b8de9"/><path d="M5.4 11.4L10.3 16 19.4 6.5" fill="none" stroke="#fff" stroke-width="2.6"/></svg>
<div class="t" style="left:1614.5px;top:551.76px;font-size:18px;color:#333;font-weight:400;">Issued To</div>
<svg class="ic" style="left:1576px;top:598.0px" width="25" height="24" viewBox="0 0 25 24"><rect width="25" height="24" rx="3" fill="#0b8de9"/><path d="M5.4 11.4L10.3 16 19.4 6.5" fill="none" stroke="#fff" stroke-width="2.6"/></svg>
<div class="t" style="left:1614.5px;top:600.76px;font-size:18px;color:#333;font-weight:400;">Issued By</div>
<div class="bx" style="left:1555px;top:653px;width:337px;height:1px;background:#e0e0e0"></div>
<div class="t" style="left:1726px;top:675.76px;font-size:18px;color:#0c8ce9;font-weight:400;letter-spacing:0px;-webkit-text-stroke:0.35px #0c8ce9">OK</div>
<div class="t" style="left:1793.5px;top:675.76px;font-size:18px;color:#212121;font-weight:400;letter-spacing:-0.4px;-webkit-text-stroke:0.35px #212121">CANCEL</div>
</div>
<div class="bx" style="left:1817px;top:797px;width:76px;height:76px;border-radius:50%;background:#1976d2;box-shadow:0 3px 5px -1px rgba(0,0,0,.2),0 6px 10px 0 rgba(0,0,0,.14),0 1px 18px 0 rgba(0,0,0,.12);z-index:6"></div>
<div class="bx" style="left:1845px;top:832.5px;width:20px;height:3.5px;background:#fff;z-index:6"></div>
<div class="bx" style="left:1853.3px;top:824px;width:3.5px;height:20px;background:#fff;z-index:6"></div>
<div class="bx" style="left:28px;top:813px;width:145px;height:62px;border-radius:31px;background:#7eaad3;z-index:6"></div>
<svg class="ic" style="left:55px;top:828px;z-index:6" width="32" height="32" viewBox="0 0 24 24"><path fill="#1f3a5a" d="M11 18h2v-2h-2v2zm1-16C6.48 2 2 6.48 2 12s4.48 10 10 10 10-4.48 10-10S17.52 2 12 2zm0 18c-4.41 0-8-3.59-8-8s3.59-8 8-8 8 3.59 8 8-3.59 8-8 8zm0-14c-2.21 0-4 1.79-4 4h2c0-1.1.9-2 2-2s2 .9 2 2c0 2-3 1.75-3 5h2c0-2.25 3-2.5 3-5 0-2.21-1.79-4-4-4z"/></svg>
<div class="t" style="left:97px;top:836.07px;font-size:20px;color:#22334a;font-weight:700;z-index:6;letter-spacing:1px">Help</div>
<div class="bx" style="left:1918px;top:351px;width:2px;height:23px;background:#fff;z-index:9"></div><div class="bx" style="left:1917px;top:350px;width:1.5px;height:25px;background:#111;z-index:9"></div><div class="bx" style="left:1917px;top:350px;width:3px;height:1.5px;background:#111;z-index:9;transform:skewY(20deg)"></div><div class="bx" style="left:1917px;top:373px;width:3px;height:1.5px;background:#111;z-index:9;transform:skewY(-20deg)"></div>
</body></html>
